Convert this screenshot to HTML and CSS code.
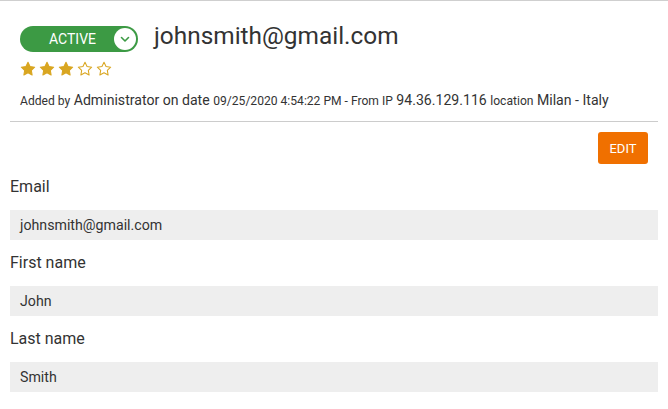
FILE: index.html
```html
<!DOCTYPE html>
<html lang="en">
<head>
    <meta charset="UTF-8">
    <title>User detail</title>
    <link rel="stylesheet" href="styles.css">
</head>
<body>
    <div class="page">
        <div class="header">
            <div class="title-row">
                <div class="status">
                    <span class="status-label">ACTIVE</span>
                    <span class="status-toggle">
                        <svg width="12" height="12" viewBox="0 0 12 12"><path d="M2.5 4.5 L6 8 L9.5 4.5" fill="none" stroke="#3c9a44" stroke-width="1.6" stroke-linecap="round" stroke-linejoin="round"/></svg>
                    </span>
                </div>
                <h1>johnsmith@gmail.com</h1>
            </div>
            <div class="stars">
                <svg class="star full" viewBox="0 0 24 24"><polygon points="12,2 15.09,8.26 22,9.27 17,14.14 18.18,21.02 12,17.77 5.82,21.02 7,14.14 2,9.27 8.91,8.26"/></svg>
                <svg class="star full" viewBox="0 0 24 24"><polygon points="12,2 15.09,8.26 22,9.27 17,14.14 18.18,21.02 12,17.77 5.82,21.02 7,14.14 2,9.27 8.91,8.26"/></svg>
                <svg class="star full" viewBox="0 0 24 24"><polygon points="12,2 15.09,8.26 22,9.27 17,14.14 18.18,21.02 12,17.77 5.82,21.02 7,14.14 2,9.27 8.91,8.26"/></svg>
                <svg class="star" viewBox="0 0 24 24"><polygon points="12,2 15.09,8.26 22,9.27 17,14.14 18.18,21.02 12,17.77 5.82,21.02 7,14.14 2,9.27 8.91,8.26"/></svg>
                <svg class="star" viewBox="0 0 24 24"><polygon points="12,2 15.09,8.26 22,9.27 17,14.14 18.18,21.02 12,17.77 5.82,21.02 7,14.14 2,9.27 8.91,8.26"/></svg>
            </div>
            <p class="meta">
                <small>Added by</small> Administrator on date <small>09/25/2020 4:54:22 PM - From IP</small> 94.36.129.116 <small>location</small> Milan - Italy
            </p>
        </div>

        <div class="actions">
            <button class="edit-button">EDIT</button>
        </div>

        <div class="field">
            <label>Email</label>
            <div class="value">johnsmith@gmail.com</div>
        </div>
        <div class="field">
            <label>First name</label>
            <div class="value">John</div>
        </div>
        <div class="field">
            <label>Last name</label>
            <div class="value">Smith</div>
        </div>
    </div>
</body>
</html>
```

FILE: styles.css
```css
/* Reset */
* {
    margin: 0;
    padding: 0;
    box-sizing: border-box;
}

body {
    font-family: Roboto, "Liberation Sans", sans-serif;
    color: #333;
    background: #fff;
    border-top: 1px solid #cfcfcf;
}

.page {
    padding: 0 10px;
}

/* Header with status, email and meta */
.header {
    padding: 21px 10px 0;
    border-bottom: 1px solid #cccccc;
}

.title-row {
    display: flex;
    align-items: center;
    gap: 16px;
    height: 34px;
}

.status {
    display: flex;
    align-items: center;
    justify-content: space-between;
    width: 118px;
    height: 26px;
    padding: 0 2px 0 29px;
    background: #3c9a44;
    border-radius: 13px;
}

.status-label {
    color: #fff;
    font-size: 14px;
}

.status-toggle {
    display: flex;
    align-items: center;
    justify-content: center;
    width: 22px;
    height: 22px;
    border-radius: 50%;
    background: #fff;
}

h1 {
    font-size: 24.4px;
    font-weight: 400;
    color: #333;
    margin-bottom: 7px;
}

.stars {
    display: flex;
    gap: 3px;
    margin-top: 3px;
    height: 20px;
    align-items: center;
}

.star {
    width: 16px;
    height: 16px;
    fill: none;
    stroke: #d9a621;
    stroke-width: 1.6;
    stroke-linejoin: round;
}

.star.full {
    fill: #d9a621;
}

.meta {
    font-size: 14.1px;
    padding: 13px 0 13px;
    color: #333;
}

.meta small {
    font-size: 12.1px;
}

/* Edit button */
.actions {
    display: flex;
    justify-content: flex-end;
    padding: 10px 10px 0;
}

.edit-button {
    background: #f07000;
    color: #fff;
    border: none;
    border-radius: 3px;
    font-family: inherit;
    font-size: 13px;
    width: 50px;
    height: 32px;
    cursor: pointer;
}

/* Fields */
.field label {
    display: block;
    font-size: 16px;
    line-height: 20px;
    margin: 13px 0;
}

.field .value {
    background: #eeeeee;
    height: 30px;
    line-height: 30px;
    padding: 0 10px;
    font-size: 14.2px;
}
```
